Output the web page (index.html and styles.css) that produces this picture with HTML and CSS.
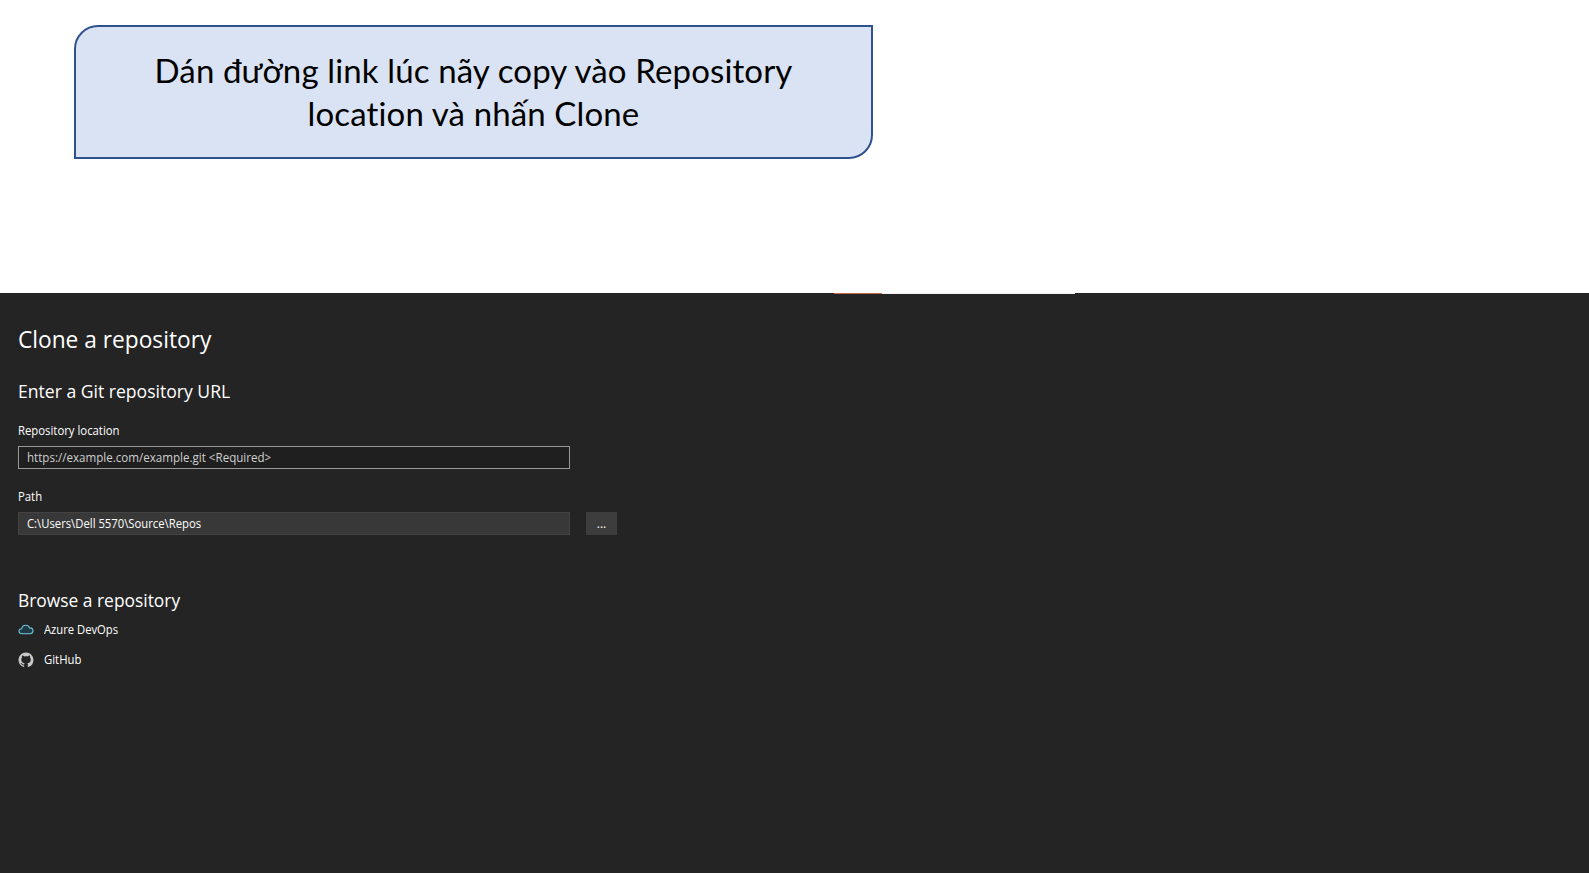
FILE: index.html
```html
<!DOCTYPE html>
<html lang="vi">
<head>
<meta charset="utf-8">
<title>Clone a repository</title>
<link rel="stylesheet" href="styles.css">
</head>
<body>
<header class="slide-head">
  <div class="callout">
    <span class="callout-line callout-first">Dán đường link lúc nãy copy vào Repository</span>
    <span class="callout-line callout-second">location và nhấn Clone</span>
  </div>
</header>
<main class="panel">
  <div class="edge"><span class="edge-accent"></span><span class="edge-light"></span></div>
  <h1 class="title">Clone a repository</h1>
  <h2 class="heading heading-url">Enter a Git repository URL</h2>
  <label class="label label-location">Repository location</label>
  <div class="field field-url"><span class="url-text">https://example.com/example.git &lt;Required&gt;</span></div>
  <label class="label label-path">Path</label>
  <div class="path-row">
    <div class="field field-path"><span class="path-text">C:\Users\Dell 5570\Source\Repos</span></div>
    <div class="browse">...</div>
  </div>
  <h2 class="heading heading-browse">Browse a repository</h2>
  <div class="provider">
    <svg class="icon" viewBox="0 .8 16 16"><path d="M4 12.500C2.200 12.500 1 11.500 1 10c0-1.400 1.100-2.400 2.600-2.400C4 5.400 5.600 4 7.700 4c1.900 0 3.300 1 3.900 2.700C13.600 6.700 15 7.900 15 9.600c0 1.700-1.300 2.900-3 2.900z" fill="#1f3a44" stroke="#72c6de" stroke-width="1.100"/></svg>
    <span class="provider-name azure">Azure DevOps</span>
  </div>
  <div class="provider">
    <svg class="icon" viewBox="-.6 -.6 17.200 17.200"><path fill="#c8c8c8" d="M8 0C3.580 0 0 3.580 0 8c0 3.540 2.290 6.530 5.470 7.590.4.07.55-.17.55-.38 0-.19-.01-.82-.01-1.490-2.010.37-2.530-.49-2.690-.94-.09-.23-.48-.94-.82-1.130-.28-.15-.68-.52-.01-.53.63-.01 1.080.58 1.230.82.72 1.210 1.870.87 2.330.66.07-.52.28-.87.51-1.070-1.780-.2-3.640-.89-3.640-3.950 0-.87.31-1.590.82-2.150-.08-.2-.36-1.020.08-2.120 0 0 .67-.21 2.200.82.64-.18 1.320-.27 2-.27s1.360.09 2 .27c1.530-1.040 2.200-.82 2.200-.82.44 1.100.16 1.920.08 2.120.51.56.82 1.270.82 2.150 0 3.070-1.870 3.750-3.650 3.950.29.25.54.73.54 1.480 0 1.070-.01 1.930-.01 2.200 0 .21.15.46.55.38A8.010 8.010 0 0 0 16 8c0-4.420-3.580-8-8-8z"/></svg>
    <span class="provider-name github">GitHub</span>
  </div>
</main>
</body>
</html>
```
FILE: styles.css
```css
* { box-sizing: border-box; }
body {
  margin: 0;
  height: 873px;
  display: flex;
  flex-direction: column;
  overflow: hidden;
  background: #fff;
  font-family: "Open Sans", "Noto Sans", sans-serif;
}
.slide-head { height: 293px; padding: 25px 0 0 74px; }
.callout {
  width: 799px;
  height: 134px;
  padding: 22px 0 0;
  display: flex;
  flex-direction: column;
  align-items: center;
  border: 2px solid #2f528f;
  border-radius: 24px 0 24px 0;
  background: #dae3f3;
  color: #000;
  font-family: Lato, "Open Sans", sans-serif;
  font-size: 33px;
  letter-spacing: .13px;
  line-height: 43px;
  white-space: nowrap;
}
.panel {
  flex: 1;
  padding-left: 18px;
  background: #242424;
  color: #fff;
  font-size: 12px;
  white-space: nowrap;
}
.edge { display: flex; height: 1px; padding-left: 816px; }
.edge-accent { width: 48px; background: #c4674c; }
.edge-light { width: 193px; background: #f1f1f1; }
.title, .heading, .label, .url-text, .path-text, .provider-name {
  transform: scaleX(.944);
  transform-origin: 0 50%;
}
.title { margin: 29px 0 0; font-size: 24px; font-weight: 400; line-height: 32px; transform: scaleX(.946); }
.heading { font-size: 18.670px; font-weight: 400; line-height: 24px; }
.heading-url { margin: 24px 0 20px; transform: scaleX(.942); }
.label { display: block; line-height: 16px; margin-bottom: 7px; }
.label-path { margin-top: 20px; }
.url-text, .path-text { display: inline-block; }
.url-text { transform: scaleX(.965); }
.path-text { transform: scaleX(.94); }
.field { width: 552px; height: 23px; padding-left: 8px; border: 1px solid #999; line-height: 21px; }
.field-url { background: #1f1f1f; color: #d0d0d0; }
.field-path { background: #383838; border-color: #434343; }
.path-row { display: flex; gap: 16px; }
.browse { width: 31px; height: 23px; background: #3d3d3d; text-align: center; line-height: 23px; }
.heading-browse { margin: 53px 0 10px; transform: scaleX(.932); }
.provider { display: flex; align-items: center; gap: 10px; height: 16px; margin-bottom: 14px; line-height: 16px; }
.azure { transform: scaleX(.935); }
.icon { width: 16px; height: 16px; }
```
